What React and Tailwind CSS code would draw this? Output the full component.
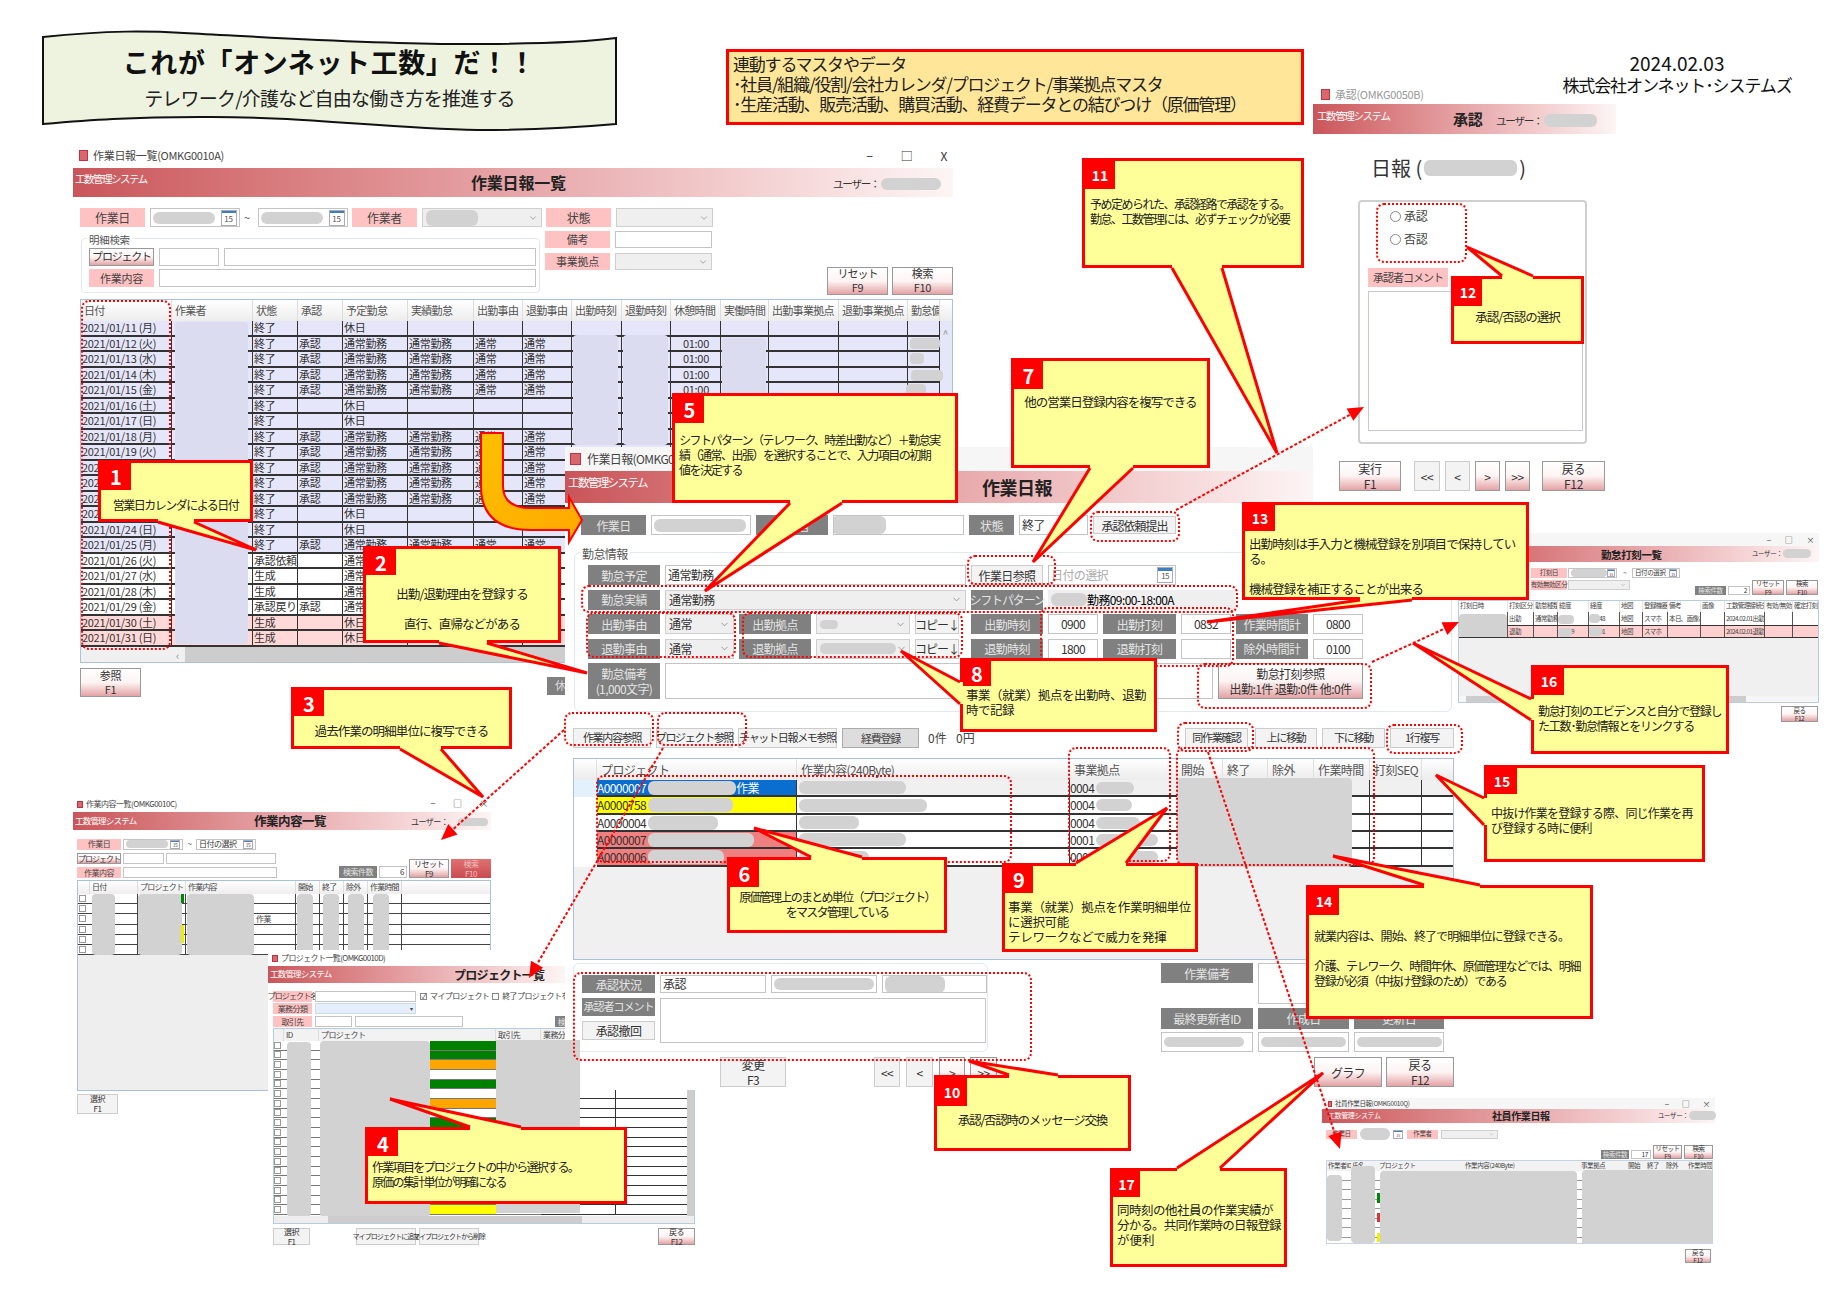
import React from "react";
import { ChevronDown } from "lucide-react";

const Blob = ({ c = "" }) => <span className={`block shrink-0 bg-[#d2d2d2] rounded-md blur-[0.5px] ${c}`} />;
const AbsBlob = ({ c = "" }) => <div className={`absolute bg-[#d2d2d2] rounded-sm ${c}`} />;
const Pink = ({ c = "", children }) => <div className={`flex items-center justify-center shrink-0 whitespace-nowrap bg-[#ffc2c2] text-[#444] ${c}`}>{children}</div>;
const Gray = ({ c = "", children }) => <div className={`flex flex-col items-center justify-center shrink-0 whitespace-nowrap bg-[#808080] text-[#e4e4e4] leading-tight ${c}`}>{children}</div>;
const Inp = ({ c = "", children }) => <div className={`flex items-center shrink-0 whitespace-nowrap overflow-hidden border border-[#c4c4c4] bg-white px-[2px] text-[#333] ${c}`}>{children}</div>;
const Combo = ({ c = "", s = 10, children }) => (
  <div className={`flex items-center justify-between shrink-0 whitespace-nowrap overflow-hidden border border-[#cfcfcf] bg-[#efefef] px-[3px] text-[#333] ${c}`}>
    <span className="flex items-center">{children}</span>
    <ChevronDown size={s} strokeWidth={1.5} className="text-[#777] shrink-0" />
  </div>
);
const Btn = ({ c = "", children }) => <div className={`flex flex-col items-center justify-center shrink-0 whitespace-nowrap leading-tight border border-[#999] bg-linear-to-b from-white via-[#fdf4f4] to-[#e3a3a5] text-[#333] ${c}`}>{children}</div>;
const Plain = ({ c = "", children }) => <div className={`flex flex-col items-center justify-center shrink-0 whitespace-nowrap leading-tight border border-[#ccc] bg-[#f3f3f3] text-[#333] ${c}`}>{children}</div>;
const Ico = ({ c = "w-[9px] h-[11px]" }) => <span className={`block shrink-0 bg-[#d9686c] border border-[#b34] ${c}`} />;
const Cal = ({ c = "w-[16px] h-[16px] text-[8px]" }) => (
  <span className={`flex flex-col shrink-0 border border-[#aab] bg-white text-[#555] leading-none ${c}`}>
    <span className="block h-[18%] bg-[#3f7fc0]" />
    <span className="flex flex-1 items-center justify-center">15</span>
  </span>
);
const Header = ({ c = "", sys, sysC, title, titleC, user, blobC }) => (
  <div className={`flex items-center relative shrink-0 bg-linear-to-r from-[#c9555a] via-[#e6a5a8] to-[#fdf5f5] ${c}`}>
    <span className={`absolute whitespace-nowrap text-white ${sysC}`}>{sys}</span>
    <span className={`absolute font-bold whitespace-nowrap text-[#222] ${titleC}`}>{title}</span>
    <span className={`absolute flex items-center whitespace-nowrap text-[#333] ${user}`}>ユーザー：<Blob c={blobC} /></span>
  </div>
);
const Dash = ({ c }) => <div className={`absolute border-2 border-dotted border-[#f00] rounded-[8px] pointer-events-none ${c}`} />;

/* ---------- callouts ---------- */
const Tail = ({ a, t, b, e }) => (
  <svg className="absolute left-0 top-0 w-[1847px] h-[1306px] pointer-events-none">
    <polygon points={`${a[0]},${a[1]} ${t[0]},${t[1]} ${b[0]},${b[1]} ${b[0] + e[0]},${b[1] + e[1]} ${a[0] + e[0]},${a[1] + e[1]}`} fill="#ffff99" />
    <polyline points={`${a[0]},${a[1]} ${t[0]},${t[1]} ${b[0]},${b[1]}`} fill="none" stroke="#ff0000" strokeWidth="3" />
  </svg>
);
const Call = ({ box, numC, n, tail, children }) => (
  <>
    <div className={`absolute bg-[#ffff99] border-[3px] border-[#f00] text-[12.5px] leading-[15px] text-[#222] overflow-hidden whitespace-nowrap ${box}`}>
      <div className={`flex items-center justify-center bg-[#f00] text-white font-bold tracking-normal ${numC}`}>{n}</div>
      {children}
    </div>
    {tail && <Tail {...tail} />}
  </>
);

/* ---------- window A table ---------- */
const gA = "grid grid-cols-[91px_81px_45px_45px_65px_66px_49px_49px_50px_49px_50px_48px_70px_69px_32px]";
const hA = ["日付", "作業者", "状態", "承認", "予定勤怠", "実績勤怠", "出勤事由", "退勤事由", "出勤時刻", "退勤時刻", "休憩時間", "実働時間", "出勤事業拠点", "退勤事業拠点", "勤怠備"];
const W = ["終了", "承認", "通常勤務", "通常勤務", "通常", "通常"];
const H = ["終了", "", "休日", "", "", ""];
const rowsA = [
  ["11 (月)", H, 0, 0], ["12 (火)", W, 0, 1], ["13 (水)", W, 0, 1], ["14 (木)", W, 0, 1], ["15 (金)", W, 0, 1], ["16 (土)", H, 0, 0], ["17 (日)", H, 0, 0],
  ["18 (月)", W, 0, 1], ["19 (火)", W, 0, 1], ["20 (水)", W, 0, 1], ["21 (木)", W, 0, 1], ["22 (金)", W, 0, 1], ["23 (土)", H, 0, 0], ["24 (日)", H, 0, 0], ["25 (月)", W, 0, 1],
  ["26 (火)", ["承認依頼", "", "通常勤務", "", "", ""], 1, 0], ["27 (水)", ["生成", "", "通常勤務", "", "", ""], 1, 0], ["28 (木)", ["生成", "", "通常勤務", "", "", ""], 1, 0], ["29 (金)", ["承認戻り", "承認", "通常勤務", "", "", ""], 1, 0],
  ["30 (土)", ["生成", "", "休日", "", "", ""], 2, 0], ["31 (日)", ["生成", "", "休日", "", "", ""], 2, 0],
];
const bgA = ["bg-[#e6e6fa]", "bg-white", "bg-[#ffd8d8]"];
const cellA = "border-r border-b-2 border-[#333] pl-[1px] overflow-hidden whitespace-nowrap leading-[13px]";

const WindowA = () => (
  <div className="absolute left-[73px] top-[143px] w-[880px] h-[560px] bg-white text-[11px] tracking-[-0.3px] flex flex-col">
    <div className="h-[25px] flex items-center pl-[6px] gap-[5px] text-[#444]">
      <Ico /><span>作業日報一覧(OMKG0010A)</span>
      <span className="ml-auto flex gap-[28px] pr-[6px] text-[#333] text-[12px]"><span>−</span><span>□</span><span>X</span></span>
    </div>
    <Header c="h-[29px]" sys="工数管理システム" sysC="left-[2px] top-[3px] text-[10.5px] tracking-[-1.5px]" title="作業日報一覧" titleC="left-[398px] top-[2px] text-[16px] tracking-[-0.2px]" user="left-[760px] top-[8px] text-[10.5px] tracking-[-1.2px]" blobC="w-[60px] h-[12px] ml-[2px]" />
    <div className="mt-[11px] ml-[7px] flex items-center gap-[4.5px]">
      <Pink c="w-[65px] h-[19px] text-[12px]">作業日</Pink>
      <Inp c="w-[90px] h-[19px] justify-between border-[#a8bcd8]"><Blob c="w-[62px] h-[12px]" /><Cal /></Inp>
      <span className="w-[9px] text-[#555]">~</span>
      <Inp c="w-[90px] h-[19px] justify-between border-[#a8bcd8]"><Blob c="w-[62px] h-[12px]" /><Cal /></Inp>
      <Pink c="w-[65px] h-[19px] text-[12px]">作業者</Pink>
      <Combo c="w-[120px] h-[19px]"><Blob c="w-[52px] h-[16px]" /></Combo>
      <Pink c="w-[65px] h-[19px] text-[12px]">状態</Pink>
      <Combo c="w-[97px] h-[19px]" />
    </div>
    <div className="flex items-start mt-[4px] ml-[8px]">
      <div className="relative mt-[7px] w-[459px] h-[55px] border border-[#e2e8ee] rounded flex flex-col gap-[3px] pl-[7px] pt-[9px]">
        <span className="absolute left-[5px] -top-[7px] bg-white px-[2px] text-[#555] text-[10.5px]">明細検索</span>
        <div className="flex gap-[5px]"><Btn c="w-[65px] h-[18px] tracking-[-1.2px]">プロジェクト</Btn><Inp c="w-[60px] h-[18px]" /><Inp c="w-[312px] h-[18px]" /></div>
        <div className="flex gap-[5px]"><Pink c="w-[65px] h-[18px]">作業内容</Pink><Inp c="w-[377px] h-[18px]" /></div>
      </div>
      <div className="ml-[5px] flex flex-col gap-[5px]">
        <div className="flex gap-[5px]"><Pink c="w-[65px] h-[17px]">備考</Pink><Inp c="w-[97px] h-[17px]" /></div>
        <div className="flex gap-[5px]"><Pink c="w-[65px] h-[17px]">事業拠点</Pink><Combo c="w-[97px] h-[17px]" /></div>
      </div>
      <div className="ml-[115px] mt-[36px] flex gap-[4px]">
        <Btn c="w-[61px] h-[28px]"><span className="tracking-[-1px]">リセット</span><span>F9</span></Btn>
        <Btn c="w-[61px] h-[28px]"><span>検索</span><span>F10</span></Btn>
      </div>
    </div>
    <div className="relative mt-[4px] ml-[7px] w-[873px] h-[364px] border border-[#a9c1dc] text-[#333] overflow-hidden">
      <div className={`${gA} h-[21px] bg-linear-to-b from-white to-[#ededed] text-[#555] tracking-[-0.7px]`}>
        {hA.map((t) => <div key={t} className="border-r border-[#ddd] pl-[3px] flex items-center whitespace-nowrap overflow-hidden">{t}</div>)}
      </div>
      {rowsA.map(([d, r, k, rest]) => (
        <div key={d} className={`${gA} h-[15.5px] ${bgA[k]}`}>
          <div className={cellA}>2021/01/{d}</div>
          <div className={cellA} />
          {r.map((t, i) => <div key={i} className={cellA}>{t}</div>)}
          <div className={cellA} /><div className={cellA} />
          <div className={`${cellA} text-center`}>{rest ? "01:00" : ""}</div>
          <div className={cellA} /><div className={cellA} /><div className={cellA} /><div className={cellA} />
        </div>
      ))}
      <AbsBlob c="left-[94px] top-[22px] w-[73px] h-[322px] bg-[#dcdcf0]" />
      <AbsBlob c="left-[492px] top-[35px] w-[45px] h-[110px] bg-[#dcdcf0]" />
      <AbsBlob c="left-[542px] top-[35px] w-[45px] h-[110px] bg-[#dcdcf0]" />
      <AbsBlob c="left-[641px] top-[38px] w-[44px] h-[58px] bg-[#dcdcf0]" />
      <AbsBlob c="left-[829px] top-[38px] w-[30px] h-[11px]" />
      <AbsBlob c="left-[829px] top-[53px] w-[14px] h-[11px]" />
      <AbsBlob c="left-[830px] top-[70px] w-[32px] h-[11px]" />
      <AbsBlob c="left-[825px] top-[84px] w-[20px] h-[11px]" />
      <span className="absolute right-[4px] top-[26px] text-[#888] text-[10px]">^</span>
      <div className="absolute left-0 right-0 top-[346.5px] h-[18px] bg-[#f0f0f0] flex items-center pl-[95px] text-[#888]">
        <span className="w-[9px]">‹</span><div className="h-full w-[760px] bg-[#cdcdcd]" />
      </div>
    </div>
    <div className="mt-[5px] ml-[7px] flex justify-between w-[492px]">
      <Btn c="w-[61px] h-[29px]"><span>参照</span><span>F1</span></Btn>
      <div className="mt-[9px] w-[25px] h-[18px] bg-[#808080] text-[#ddd] overflow-hidden pl-[8px] whitespace-nowrap">休憩</div>
    </div>
  </div>
);

/* ---------- window C ---------- */
const WindowC = () => (
  <div className="absolute left-[1313px] top-[85px] w-[303px] h-[410px] flex flex-col text-[11px] tracking-[-0.3px] text-[#444]">
    <div className="h-[19px] flex items-center gap-[5px] pl-[8px] text-[#999]"><Ico /><span>承認(OMKG0050B)</span></div>
    <Header c="h-[30px]" sys="工数管理システム" sysC="left-[4px] top-[4px] text-[10.5px] tracking-[-1.4px]" title="承認" titleC="left-[140px] top-[4px] text-[15px]" user="left-[183px] top-[9px] text-[10.5px] tracking-[-1.2px]" blobC="w-[53px] h-[13px] ml-[2px]" />
    <div className="ml-[58px] mt-[22px] flex items-center text-[20px] leading-[24px] text-[#333] tracking-normal">日報 (<Blob c="w-[93px] h-[16px] mx-[2px]" />)</div>
    <div className="ml-[45px] mt-[20px] w-[229px] h-[244px] border-2 border-[#d0d0d0] rounded pl-[8px] flex flex-col text-[12px]">
      <div className="ml-[22px] mt-[6px] flex items-center gap-[3px] h-[16px]"><span className="block w-[11px] h-[11px] rounded-full border border-[#888] bg-white" />承認</div>
      <div className="ml-[22px] mt-[7px] flex items-center gap-[3px] h-[16px]"><span className="block w-[11px] h-[11px] rounded-full border border-[#888] bg-white" />否認</div>
      <Pink c="mt-[21px] w-[80px] h-[19px] text-[11px] tracking-[-1px]">承認者コメント</Pink>
      <div className="mt-[4px] w-[215px] h-[140px] border border-[#c8c8d8] bg-white" />
    </div>
    <div className="ml-[26px] mt-[17px] flex gap-[5px] text-[12px]">
      <Btn c="w-[62px] h-[30px]"><span>実行</span><span>F1</span></Btn>
      <Plain c="ml-[8px] w-[26px] h-[30px]">{"<<"}</Plain>
      <Plain c="w-[25px] h-[30px]">{"<"}</Plain>
      <Btn c="w-[25px] h-[30px]">{">"}</Btn>
      <Btn c="w-[25px] h-[30px]">{">>"}</Btn>
      <Btn c="ml-[7px] w-[63px] h-[30px]"><span>戻る</span><span>F12</span></Btn>
    </div>
  </div>
);

/* ---------- window D ---------- */
const gD = "grid grid-cols-[49px_26px_24px_31px_31px_23px_25px_33px_24px_40px_28px_27px]";
const WindowD = () => (
  <div className="absolute left-[1458px] top-[533px] w-[361px] h-[190px] bg-white text-[6.5px] tracking-[-0.4px] text-[#444] flex flex-col">
    <div className="h-[13px] bg-[#f6f6f6] flex justify-end items-center gap-[14px] pr-[5px] text-[8px]"><span>−</span><span>□</span><span>×</span></div>
    <Header c="h-[16px]" sys="" sysC="" title="勤怠打刻一覧" titleC="left-[143px] top-[1px] text-[10.5px]" user="left-[294px] top-[3px] text-[6.5px]" blobC="w-[28px] h-[9px] ml-[1px] rounded-full" />
    <div className="mt-[6px] ml-[73px] flex items-center gap-[1px]"><Pink c="w-[36px] h-[10px]">打刻日</Pink><Inp c="w-[49px] h-[10px] justify-between"><Blob c="w-[36px] h-[8px]" /><Cal c="w-[8px] h-[8px] text-[4px]" /></Inp><span className="w-[13px] text-center">~</span><Inp c="w-[48px] h-[10px] justify-between">日付の選択<Cal c="w-[8px] h-[8px] text-[4px]" /></Inp></div>
    <div className="relative mt-[2px] ml-[73px] flex items-start gap-[1px] h-[20px]">
      <Pink c="w-[36px] h-[10px]">有効無効区分</Pink><Combo c="w-[62px] h-[10px]" s={6} />
      <div className="ml-auto mr-[1px] flex items-end gap-[2px]">
        <Gray c="w-[31px] h-[9px]">検索件数</Gray>
        <Inp c="w-[22px] h-[9px] justify-end">2</Inp>
        <Btn c="w-[32px] h-[15px]"><span>リセット</span><span>F9</span></Btn>
        <Btn c="w-[32px] h-[15px]"><span>検索</span><span>F10</span></Btn>
      </div>
    </div>
    <div className="relative h-[103px] border border-[#b8cce0] bg-[#f0f0f0] overflow-hidden">
      <div className={`${gD} h-[11px] bg-white tracking-[-0.6px]`}>
        {["打刻日時", "打刻区分", "勤怠種類", "緯度", "経度", "地図", "登録機器", "備考", "画像", "工数管理接続先", "有効/無効", "確定打刻"].map((t) => <div key={t} className="pl-[1px] border-r border-[#e4e4e4] overflow-hidden whitespace-nowrap">{t}</div>)}
      </div>
      <div className={`${gD} h-[14px] bg-white border-b border-[#333] tracking-[-0.6px]`}>
        {["", "出勤", "通常勤務", "-7905", "53848", "地図", "スマホ", "本日、画像あり", "", "2024.02.01出勤", "", ""].map((t, i) => <div key={i} className="pl-[1px] border-r border-[#555] overflow-hidden whitespace-nowrap flex items-center">{t}</div>)}
      </div>
      <div className={`${gD} h-[12px] bg-[#ffd0d0] border-b border-[#333] tracking-[-0.6px]`}>
        {["", "退勤", "", "69869", "54301", "地図", "スマホ", "", "", "2024.02.01退勤", "", ""].map((t, i) => <div key={i} className="pl-[1px] border-r border-[#555] overflow-hidden whitespace-nowrap flex items-center">{t}</div>)}
      </div>
      <AbsBlob c="left-0 top-[13px] w-[48px] h-[23px]" />
      <AbsBlob c="left-[99px] top-[14px] w-[16px] h-[9px] rounded-full" />
      <AbsBlob c="left-[130px] top-[13px] w-[11px] h-[9px] rounded-full" />
      <AbsBlob c="left-[99px] top-[27px] w-[14px] h-[9px] rounded-full" />
      <AbsBlob c="left-[130px] top-[26px] w-[13px] h-[9px] rounded-full" />
      <div className="absolute left-0 right-0 bottom-0 h-[6px] bg-[#f6f6f6] flex px-[7px]"><div className="w-[280px] h-full bg-[#cdcdcd]" /></div>
    </div>
    <div className="mt-[3px] mr-[1px] self-end"><Btn c="w-[37px] h-[16px]"><span>戻る</span><span>F12</span></Btn></div>
  </div>
);

/* ---------- window E ---------- */
const gE = "grid grid-cols-[12px_48px_48px_110px_24px_24px_24px_34px_90px]";
const WindowE = () => (
  <div className="absolute left-[73px] top-[796px] w-[418px] h-[320px] bg-white text-[8px] tracking-[-0.5px] text-[#444] flex flex-col">
    <div className="h-[16px] flex items-center gap-[3px] pl-[4px]"><Ico c="w-[6px] h-[7px]" /><span>作業内容一覧(OMKG0010C)</span>
      <span className="ml-auto flex gap-[18px] pr-[3px] text-[9px]"><span>−</span><span>□</span><span>×</span></span></div>
    <Header c="h-[18px]" sys="工数管理システム" sysC="left-[2px] top-[2px] text-[8.5px] tracking-[-0.8px]" title="作業内容一覧" titleC="left-[181px] top-[0px] text-[12.5px]" user="left-[338px] top-[4px] text-[8px]" blobC="w-[30px] h-[8px] ml-[10px] rounded-full" />
    <div className="mt-[8px] ml-[4px] flex items-center gap-[2px]"><Pink c="w-[44px] h-[11px]">作業日</Pink><Inp c="w-[60px] h-[11px] justify-between border-[#b0c4dc]"><Blob c="w-[42px] h-[8px]" /><Cal c="w-[10px] h-[9px] text-[5px]" /></Inp><span className="w-[9px] text-center">~</span><Inp c="w-[60px] h-[11px] justify-between border-[#b0c4dc]">日付の選択<Cal c="w-[10px] h-[9px] text-[5px]" /></Inp></div>
    <div className="relative mt-[3px] ml-[4px] h-[25px] flex items-end">
      <div className="flex flex-col gap-[3px]">
        <div className="flex gap-[2px]"><Btn c="w-[44px] h-[11px] tracking-[-1px]">プロジェクト</Btn><Inp c="w-[41px] h-[11px]" /><Inp c="w-[110px] h-[11px]" /></div>
        <div className="flex gap-[2px]"><Pink c="w-[44px] h-[11px]">作業内容</Pink><Inp c="w-[154px] h-[11px]" /></div>
      </div>
      <div className="ml-auto flex items-end gap-[2px]">
        <Gray c="w-[38px] h-[12px]">検索件数</Gray><Inp c="w-[28px] h-[12px] justify-end">6</Inp>
        <Btn c="w-[40px] h-[19px]"><span>リセット</span><span>F9</span></Btn>
        <div className="flex flex-col items-center justify-center w-[40px] h-[19px] leading-tight bg-linear-to-b from-[#e07070] to-[#c94c50] text-[#f0c0c0]"><span>検索</span><span>F10</span></div>
      </div>
    </div>
    <div className="relative mt-[2px] ml-[4px] w-[414px] h-[211px] border border-[#a9c1dc] bg-[#eee] overflow-hidden">
      <div className={`${gE} h-[13px] bg-linear-to-b from-white to-[#eee] tracking-[-0.8px]`}>
        {["", "日付", "プロジェクト", "作業内容", "開始", "終了", "除外", "作業時間", ""].map((t, i) => <div key={i} className="pl-[2px] whitespace-nowrap overflow-hidden border-r border-[#ddd]">{t}</div>)}
      </div>
      {["/26", "/26", "/26", "/29", "/29", "/29"].map((d, i) => (
        <div key={i} className={`${gE} h-[10.2px] bg-white`}>
          <div className="border-b border-[#444] flex items-center"><span className="block w-[7px] h-[7px] border border-[#999] ml-[1px]" /></div>
          <div className="border-b border-r border-[#444] text-right pr-[26px] leading-[9px]">{d}</div>
          <div className="border-b border-r border-[#444]" />
          <div className="border-b border-r border-[#444]" />
          <div className="border-b border-r border-[#444]" /><div className="border-b border-r border-[#444]" /><div className="border-b border-r border-[#444]" /><div className="border-b border-r border-[#444]" />
          <div className="border-b border-[#444]" />
        </div>
      ))}
      <AbsBlob c="left-[14px] top-[13px] w-[23px] h-[61px]" />
      <AbsBlob c="left-[60px] top-[13px] w-[44px] h-[61px]" />
      <div className="absolute left-[103px] top-[13px] w-[3px] h-[9px] bg-[#080]" />
      <div className="absolute left-[103px] top-[44px] w-[3px] h-[18px] bg-[#ee0]" />
      <AbsBlob c="left-[109px] top-[13px] w-[67px] h-[61px]" />
      <AbsBlob c="left-[219px] top-[13px] w-[16px] h-[61px]" />
      <AbsBlob c="left-[245px] top-[13px] w-[16px] h-[61px]" />
      <AbsBlob c="left-[270px] top-[13px] w-[16px] h-[61px]" />
      <AbsBlob c="left-[295px] top-[13px] w-[16px] h-[61px]" />
      <span className="absolute left-[178px] top-[33px] leading-[10px]">作業</span>
    </div>
    <div className="mt-[3px] ml-[4px]"><Plain c="w-[41px] h-[20px]"><span>選択</span><span>F1</span></Plain></div>
  </div>
);

/* ---------- window F ---------- */
const gF = "grid grid-cols-[10px_35px_177px_45px_75px_80px]";
const strip = ["bg-[#008000]", "bg-[#008000]", "bg-[#ffa500]", "bg-white", "bg-[#008000]", "bg-white", "bg-[#ffa500]", "bg-white", "bg-[#008000]", "bg-white", "bg-white", "bg-white", "bg-white", "bg-white", "bg-white", "bg-white", "bg-white", "bg-[#ffff00]"];
const WindowF = () => (
  <div className="absolute left-[268px] top-[950px] w-[427px] h-[295px] bg-white text-[8px] tracking-[-0.6px] text-[#444] flex flex-col">
    <div className="h-[16px] flex items-center gap-[3px] pl-[4px]"><Ico c="w-[6px] h-[7px]" /><span>プロジェクト一覧(OMKG0010D)</span></div>
    <Header c="h-[17px] w-[297px]" sys="工数管理システム" sysC="left-[2px] top-[1px] text-[8.5px] tracking-[-0.8px]" title="プロジェクト一覧" titleC="left-[186px] top-[0px] text-[12px] tracking-[-0.7px]" user="hidden" blobC="" />
    <div className="mt-[8px] ml-[5px] flex items-center gap-[3px] h-[10px]"><Pink c="w-[39px] h-[11px] tracking-[-0.9px]">プロジェクト名</Pink><Inp c="w-[101px] h-[11px]" />
      <span className="ml-[1px] flex items-center justify-center w-[7px] h-[7px] border border-[#888] text-[7px] leading-none">✓</span><span className="whitespace-nowrap">マイプロジェクト</span>
      <span className="block w-[7px] h-[7px] border border-[#888]" /><span className="whitespace-nowrap">終了プロジェクトを含む</span></div>
    <div className="mt-[2px] ml-[5px] flex items-center gap-[3px]"><Pink c="w-[39px] h-[11px]">業務分類</Pink><div className="w-[101px] h-[11px] flex items-center justify-end pr-[3px] bg-[#e4eefc] border border-[#cdd]"><span className="text-[6px]">▾</span></div></div>
    <div className="mt-[2px] ml-[5px] flex items-center gap-[3px]"><Pink c="w-[39px] h-[11px]">取引先</Pink><Inp c="w-[37px] h-[11px]" /><Inp c="w-[108px] h-[11px]" />
      <Gray c="ml-[89px] w-[13px] h-[11px] overflow-hidden">検</Gray></div>
    <div className="relative mt-[1px] ml-[5px] w-[422px] h-[196px] border border-[#b8cce0] bg-white overflow-hidden">
      <div className={`${gF} h-[12px] bg-[#f2f2f2]`}>
        {["", "ID", "プロジェクト", "取引先", "業務分類", ""].map((t, i) => <div key={i} className="pl-[2px] whitespace-nowrap overflow-hidden border-r border-[#ddd]">{t}</div>)}
      </div>
      {strip.map((s, i) => (
        <div key={i} className={`${gF} h-[9.66px]`}>
          <div className="border-b border-[#777] flex items-center"><span className="block w-[7px] h-[7px] border border-[#999]" /></div>
          <div className="border-b border-[#777]" />
          <div className="flex justify-end border-b border-[#777]"><div className={`w-[66px] h-full ${s}`} /></div>
          <div className="border-b border-[#777]" />
          <div className="border-b border-r border-[#333]" />
          <div className="border-b border-[#333]" />
        </div>
      ))}
      <AbsBlob c="left-[13px] top-[13px] w-[24px] h-[175px]" />
      <AbsBlob c="left-[46px] top-[12px] w-[110px] h-[176px]" />
      <div className="absolute right-0 top-[60px] w-[7px] h-[128px] bg-[#cdcdcd]" />
      <div className="absolute left-0 right-0 bottom-0 h-[7px] bg-[#eee] flex pl-[54px]"><div className="w-[254px] h-full bg-[#cdcdcd]" /></div>
    </div>
    <div className="mt-[4px] ml-[5px] flex items-center">
      <Plain c="w-[37px] h-[17px]"><span>選択</span><span>F1</span></Plain>
      <Plain c="ml-[46px] w-[60px] h-[17px] text-[7px] tracking-[-0.9px]">マイプロジェクトに追加</Plain>
      <Plain c="ml-[3px] w-[60px] h-[17px] text-[7px] tracking-[-1px]">マイプロジェクトから削除</Plain>
      <Btn c="ml-[179px] w-[37px] h-[17px]"><span>戻る</span><span>F12</span></Btn>
    </div>
  </div>
);

/* ---------- window G ---------- */
const WindowG = () => (
  <div className="absolute left-[1322px] top-[1098px] w-[393px] h-[165px] bg-white text-[6.5px] tracking-[-0.4px] text-[#444] flex flex-col">
    <div className="h-[11px] bg-[#f6f6f6] flex items-center gap-[3px] pl-[6px]"><Ico c="w-[4px] h-[6px]" /><span>社員作業日報(OMKG0010Q)</span>
      <span className="ml-auto flex gap-[13px] pr-[5px] text-[8px]"><span>−</span><span>□</span><span>×</span></span></div>
    <Header c="h-[14px]" sys="工数管理システム" sysC="left-[6px] top-[1px] text-[7px]" title="社員作業日報" titleC="left-[170px] top-[-1px] text-[10px]" user="left-[336px] top-[2px] text-[6.5px]" blobC="w-[27px] h-[9px] ml-[1px] rounded-full" />
    <div className="mt-[5px] ml-[4px] flex items-center gap-[3px]"><Pink c="w-[31px] h-[9px]">作業日</Pink><Blob c="w-[30px] h-[12px]" /><Cal c="w-[10px] h-[9px] text-[4px]" /><Pink c="ml-[1px] w-[31px] h-[9px]">作業者</Pink><Combo c="w-[57px] h-[9px]" s={5} /></div>
    <div className="mt-[5px] h-[14px] flex items-end justify-end gap-[2px] pr-[2px]">
      <Gray c="w-[28px] h-[9px]">検索件数</Gray><Inp c="w-[20px] h-[9px] justify-end">17</Inp>
      <Btn c="w-[29px] h-[14px]"><span>リセット</span><span>F9</span></Btn>
      <Btn c="w-[29px] h-[14px]"><span>検索</span><span>F10</span></Btn>
    </div>
    <div className="relative mt-[1px] ml-[4px] w-[387px] h-[87px] border border-[#c4d4e4] bg-white overflow-hidden">
      <div className="grid grid-cols-[24px_27px_86px_116px_47px_19px_19px_22px_27px] h-[10px] bg-[#f2f2f2]">
        {["作業者ID", "氏名", "プロジェクト", "作業内容(240Byte)", "事業拠点", "開始", "終了", "除外", "作業時間"].map((t) => <div key={t} className="pl-[1px] whitespace-nowrap overflow-hidden">{t}</div>)}
      </div>
      {[0, 1, 2, 3, 4, 5, 6, 7].map((i) => <div key={i} className="h-[9.5px] border-b border-[#999]" />)}
      <AbsBlob c="left-0 top-[14px] w-[15px] h-[66px]" />
      <AbsBlob c="left-[24px] top-[5px] w-[24px] h-[77px]" />
      <AbsBlob c="left-[53px] top-[10px] w-[197px] h-[75px]" />
      <AbsBlob c="left-[255px] top-[9px] w-[131px] h-[76px]" />
      <div className="absolute left-[50px] top-[32px] w-[3px] h-[10px] bg-[#080]" />
      <div className="absolute left-[50px] top-[52px] w-[3px] h-[9px] bg-[#d33]" />
      <div className="absolute left-[50px] top-[72px] w-[3px] h-[9px] bg-[#ee0]" />
    </div>
    <div className="mt-[5px] mr-[4px] self-end"><Btn c="w-[26px] h-[14px]"><span>戻る</span><span>F12</span></Btn></div>
  </div>
);

/* ---------- window B ---------- */
const gB = "grid grid-cols-[23px_200px_273px_107px_46px_45px_46px_56px_52px_33px]";
const rowsB = [
  { h: "h-[17px]", c0: "bg-[#e2f1fb]", c: "bg-[#0a6ed1] text-white", id: "A0000007", w: "w-[88px]", suf: "作業", w2: "w-[107px]", t: "0004", w3: "w-[38px]", bg: "bg-[#f0f0f0]" },
  { h: "h-[18px]", c0: "bg-white", c: "bg-[#ffff00]", id: "A0000758", w: "w-[85px]", w2: "w-[128px]", t: "0004", w3: "w-[36px]", bg: "bg-white" },
  { h: "h-[17px]", c0: "bg-white", c: "bg-white", id: "A0000004", w: "w-[70px]", w2: "w-[60px]", t: "0004", w3: "w-[44px]", bg: "bg-white" },
  { h: "h-[17px]", c0: "bg-white", c: "bg-[#f08080]", id: "A0000007", w: "w-[106px]", w2: "w-[107px]", t: "0001", w3: "w-[62px]", bg: "bg-white" },
  { h: "h-[18px]", c0: "bg-white", c: "bg-[#f08080]", id: "A0000006", w: "w-[76px]", w2: "w-[70px]", t: "0001", w3: "w-[62px]", bg: "bg-white" },
];
const WindowB = () => (
  <div className="absolute left-[565px] top-[447px] w-[748px] h-[643px] bg-white text-[12px] tracking-[-0.6px] flex flex-col">
    <div className="h-[24px] bg-[#f6f6f6] flex items-center gap-[6px] pl-[5px] text-[#444]"><Ico c="w-[11px] h-[12px]" /><span>作業日報(OMKG0010B)</span></div>
    <Header c="h-[32px]" sys="工数管理システム" sysC="left-[3px] top-[3px] text-[11.5px] tracking-[-1.6px]" title="作業日報" titleC="left-[417px] top-[3px] text-[18px] tracking-[-0.5px]" user="hidden" blobC="" />
    <div className="mt-[12px] ml-[16px] flex items-center gap-[5px]">
      <Gray c="w-[65px] h-[20px]">作業日</Gray>
      <Inp c="w-[100px] h-[20px] border-[#9cc4ea]"><Blob c="w-[92px] h-[13px]" /></Inp>
      <Gray c="w-[72px] h-[20px]">作業者</Gray>
      <Inp c="w-[131px] h-[20px]"><Blob c="w-[55px] h-[18px] -ml-[5px] rounded-full" /></Inp>
      <Gray c="w-[45px] h-[20px]">状態</Gray>
      <Inp c="w-[69px] h-[20px]">終了</Inp>
      <Plain c="w-[83px] h-[18px] tracking-[-1px]">承認依頼提出</Plain>
    </div>
    <div className="relative mt-[17px] ml-[9px] w-[878px] h-[160px] border border-[#e0e8f0] rounded-md pl-[13px] pt-[12px] flex flex-col gap-[4.6px] shrink-0 bg-white">
      <span className="absolute left-[6px] -top-[8px] bg-white px-[1px] text-[#555]">勤怠情報</span>
      <div className="flex gap-[5px]"><Gray c="w-[72px] h-[20px]">勤怠予定</Gray><Inp c="w-[301px] h-[20px]">通常勤務</Inp><Plain c="w-[72px] h-[20px]">作業日参照</Plain>
        <Inp c="w-[128px] h-[20px] justify-between text-[#aaa]">日付の選択<Cal /></Inp></div>
      <div className="flex gap-[5px]"><Gray c="w-[72px] h-[20px]">勤怠実績</Gray><Combo c="w-[301px] h-[20px]" s={11}>通常勤務</Combo><Gray c="w-[72px] h-[20px] tracking-[-1.2px]">シフトパターン</Gray>
        <div className="w-[187px] h-[20px] bg-[#efefef] flex items-center pl-[3px] whitespace-nowrap"><Blob c="w-[36px] h-[13px]" />勤務09:00-18:00A</div></div>
      <div className="flex gap-[5px]"><Gray c="w-[72px] h-[20px]">出勤事由</Gray><Combo c="w-[69px] h-[20px]" s={11}>通常</Combo><Gray c="w-[72px] h-[20px]">出勤拠点</Gray><Combo c="w-[94px] h-[20px]" s={11}><Blob c="w-[18px] h-[9px] rounded-full" /></Combo><Plain c="w-[44px] h-[20px] tracking-[-1px]">コピー↓</Plain>
        <Gray c="ml-[7px] w-[72px] h-[20px]">出勤時刻</Gray><Inp c="w-[50px] h-[20px] justify-center">0900</Inp><Gray c="w-[73px] h-[20px]">出勤打刻</Gray><Inp c="w-[50px] h-[20px] justify-center">0832</Inp><Gray c="w-[72px] h-[20px]">作業時間計</Gray><Inp c="w-[50px] h-[20px] justify-center">0800</Inp></div>
      <div className="flex gap-[5px]"><Gray c="w-[72px] h-[20px]">退勤事由</Gray><Combo c="w-[69px] h-[20px]" s={11}>通常</Combo><Gray c="w-[72px] h-[20px]">退勤拠点</Gray><Combo c="w-[94px] h-[20px]" s={11}><Blob c="w-[76px] h-[11px] rounded-full" /></Combo><Plain c="w-[44px] h-[20px] tracking-[-1px]">コピー↓</Plain>
        <Gray c="ml-[7px] w-[72px] h-[20px]">退勤時刻</Gray><Inp c="w-[50px] h-[20px] justify-center">1800</Inp><Gray c="w-[73px] h-[20px]">退勤打刻</Gray><Inp c="w-[50px] h-[20px]" /><Gray c="w-[72px] h-[20px]">除外時間計</Gray><Inp c="w-[50px] h-[20px] justify-center">0100</Inp></div>
      <div className="flex gap-[5px]"><Gray c="w-[72px] h-[36px]"><span>勤怠備考</span><span>(1,000文字)</span></Gray><Inp c="w-[548px] h-[36px]" /><Btn c="w-[145px] h-[36px]"><span>勤怠打刻参照</span><span>出勤:1件 退勤:0件 他:0件</span></Btn></div>
    </div>
    <div className="mt-[16px] ml-[8px] flex items-center gap-[5px] h-[20px] text-[11px] tracking-[-1.3px] shrink-0">
      <Plain c="w-[78px] h-[20px]">作業内容参照</Plain><Plain c="w-[77px] h-[20px]">プロジェクト参照</Plain><Plain c="w-[99px] h-[20px]">チャット日報メモ参照</Plain>
      <div className="flex items-center justify-center shrink-0 whitespace-nowrap w-[77px] h-[20px] bg-[#ddd] border border-[#aaa] text-[#444]">経費登録</div>
      <span className="ml-[4px] w-[18px] shrink-0 whitespace-nowrap text-[#444] text-[12px] tracking-normal">0件</span><span className="ml-[5px] w-[18px] shrink-0 whitespace-nowrap text-[#444] text-[12px] tracking-normal">0円</span>
      <Plain c="ml-[206px] w-[63px] h-[20px]">同作業確認</Plain>
      <Plain c="ml-[2px] w-[62px] h-[20px]">上に移動</Plain><Plain c="w-[63px] h-[20px]">下に移動</Plain><Plain c="w-[64px] h-[20px]">1行複写</Plain>
    </div>
    <div className="relative mt-[10px] ml-[8px] w-[881px] h-[202px] shrink-0 border border-[#a9c1dc] bg-[#f0f0f0] overflow-hidden text-[#333]">
      <div className={`${gB} h-[21px] bg-linear-to-b from-white to-[#ececec] text-[#555]`}>
        {["", "プロジェクト", "作業内容(240Byte)", "事業拠点", "開始", "終了", "除外", "作業時間", "打刻SEQ", ""].map((t, i) => <div key={i} className="pl-[4px] flex items-center whitespace-nowrap border-r border-[#e0e0e0]">{t}</div>)}
      </div>
      {rowsB.map((r, i) => (
        <div key={i} className={`${gB} ${r.h}`}>
          <div className={r.c0} />
          <div className={`flex items-center justify-start overflow-hidden border-b-2 border-r border-[#333] whitespace-nowrap ${r.c}`}>{r.id}<Blob c={`${r.w} h-[14px] ml-[2px]`} />{r.suf}</div>
          <div className={`flex items-center border-b-2 border-r border-[#333] pl-[2px] ${r.bg}`}><Blob c={`${r.w2} h-[13px]`} /></div>
          <div className={`flex items-center border-b-2 border-[#333] overflow-hidden ${r.bg}`}>{r.t}<Blob c={`${r.w3} h-[12px] ml-[2px]`} /></div>
          <div className={`border-b-2 border-[#333] ${r.bg}`} /><div className={`border-b-2 border-[#333] ${r.bg}`} /><div className={`border-b-2 border-[#333] ${r.bg}`} />
          <div className={`border-b-2 border-r border-[#333] ${r.bg}`} />
          <div className={`border-b-2 border-r border-[#333] ${r.bg}`} />
          <div className={`border-b-2 border-[#333] ${r.bg}`} />
        </div>
      ))}
      <AbsBlob c="left-[603px] top-[19px] w-[175px] h-[89px] bg-[#d4d4d4]" />
    </div>
    <div className="mt-[3px] ml-[8px] flex">
      <div className="w-[424px] h-[89px] border border-[#e0e8f0] rounded-md pl-[8px] pt-[11px] flex flex-col gap-[5px]">
        <div className="flex gap-[5px]"><Gray c="w-[73px] h-[18px]">承認状況</Gray><Inp c="w-[106px] h-[18px]">承認</Inp><Inp c="w-[106px] h-[18px]"><Blob c="w-[100px] h-[12px]" /></Inp><Inp c="w-[105px] h-[18px]"><Blob c="w-[60px] h-[17px] rounded-full" /></Inp></div>
        <div className="flex gap-[5px]">
          <div className="flex flex-col gap-[5px]"><Gray c="w-[73px] h-[18px] text-[11px] tracking-[-1px]">承認者コメント</Gray><Plain c="w-[73px] h-[19px]">承認撤回</Plain></div>
          <Inp c="w-[326px] h-[45px]" />
        </div>
      </div>
      <div className="ml-[173px] flex flex-col">
        <div className="flex gap-[5px]"><Gray c="w-[92px] h-[20px]">作業備考</Gray><Inp c="w-[187px] h-[41px]" /></div>
        <div className="flex gap-[5px] mt-[4px]"><Gray c="w-[92px] h-[21px]">最終更新者ID</Gray><Gray c="w-[91px] h-[21px]">作成日</Gray><Gray c="w-[90px] h-[21px]">更新日</Gray></div>
        <div className="flex gap-[5px] mt-[3px]"><Inp c="w-[92px] h-[20px]"><Blob c="w-[80px] h-[10px]" /></Inp><Inp c="w-[91px] h-[20px]"><Blob c="w-[85px] h-[10px]" /></Inp><Inp c="w-[90px] h-[20px]"><Blob c="w-[85px] h-[10px]" /></Inp></div>
      </div>
    </div>
    <div className="mt-[5px] flex items-start">
      <Plain c="ml-[155px] w-[66px] h-[30px]"><span>変更</span><span>F3</span></Plain>
      <Plain c="ml-[88px] w-[26px] h-[30px]">{"<<"}</Plain>
      <Plain c="ml-[6px] w-[27px] h-[30px]">{"<"}</Plain>
      <Btn c="ml-[6px] w-[26px] h-[30px]">{">"}</Btn>
      <Btn c="ml-[5px] w-[27px] h-[30px]">{">>"}</Btn>
      <Btn c="ml-[317px] w-[68px] h-[30px]">グラフ</Btn>
      <Btn c="ml-[4px] w-[68px] h-[30px]"><span>戻る</span><span>F12</span></Btn>
    </div>
  </div>
);

/* ---------- overlay arrows ---------- */
const Arrow = ({ x1, y1, x2, y2, h = 16, w = 7 }) => {
  const d = Math.hypot(x2 - x1, y2 - y1), ux = (x2 - x1) / d, uy = (y2 - y1) / d;
  const bx = x2 - ux * h, by = y2 - uy * h;
  return (
    <>
      <line x1={x1} y1={y1} x2={bx} y2={by} stroke="#f00" strokeWidth="2" strokeDasharray="3 2" />
      <polygon points={`${x2},${y2} ${bx - uy * w},${by + ux * w} ${bx + uy * w},${by - ux * w}`} fill="#f00" />
    </>
  );
};

export default function App() {
  return (
    <div className="relative w-[1847px] h-[1306px] overflow-hidden bg-white font-['Noto_Sans_CJK_JP',sans-serif]">
      {/* banner */}
      <svg className="absolute left-0 top-0 w-[640px] h-[140px]">
        <path d="M43,37 C110,30 150,31 184,33 C280,38 370,44 459,44 C520,44 580,43 616,38 L616,124 C560,129 510,130 478,130 C380,128 300,116 200,117 C130,117 90,120 43,124 Z" fill="#eef3e0" stroke="#111" strokeWidth="2" />
      </svg>
      <div className="absolute left-[43px] top-[45px] w-[573px] flex flex-col items-center">
        <div className="text-[27px] leading-[34px] font-bold tracking-[0.6px] text-[#111] whitespace-nowrap">これが「オンネット工数」だ！！</div>
        <div className="mt-[6px] text-[19px] leading-[26px] tracking-[-0.8px] text-[#222] whitespace-nowrap">テレワーク/介護など自由な働き方を推進する</div>
      </div>
      {/* master note */}
      <div className="absolute left-[726px] top-[49px] w-[578px] h-[76px] bg-[#ffe699] border-[3px] border-[#f00] pl-[4px] pt-[2px] text-[17px] leading-[20px] tracking-[-1.2px] text-[#222] whitespace-nowrap">
        <div>連動するマスタやデータ</div>
        <div>･社員/組織/役割/会社カレンダ/プロジェクト/事業拠点マスタ</div>
        <div>･生産活動、販売活動、購買活動、経費データとの結びつけ（原価管理）</div>
      </div>
      <div className="absolute left-[1550px] top-[52px] w-[254px] flex flex-col items-center text-[#111] whitespace-nowrap">
        <div className="text-[19px] leading-[22px]">2024.02.03</div>
        <div className="text-[17px] leading-[22px] tracking-[-1.1px]">株式会社オンネット･システムズ</div>
      </div>

      <WindowA />
      <WindowC />
      <WindowD />
      <WindowE />
      <WindowF />
      <WindowG />
      <WindowB />
      <div className="absolute left-[496px] top-[1040px] w-[84px] h-[173px] bg-[#d2d2d2]" />

      {/* big curved arrow */}
      <svg className="absolute left-0 top-0 w-[1847px] h-[1306px] pointer-events-none">
        <defs>
          <linearGradient id="ya" x1="0" y1="0" x2="1" y2="1"><stop offset="0" stopColor="#ffc000" /><stop offset="1" stopColor="#ffa800" /></linearGradient>
        </defs>
        <path d="M481,433 L503,433 L503,486 Q503,508 531,508 L569,508 L569,497 L582,520 L569,542 L569,530 L531,530 Q481,530 481,486 Z" fill="url(#ya)" stroke="#f00" strokeWidth="2" />
      </svg>

      {/* dotted emphasis */}
      <Dash c="left-[81px] top-[300px] w-[90px] h-[350px]" />
      <Dash c="left-[967px] top-[555px] w-[89px] h-[30px]" />
      <Dash c="left-[1090px] top-[511px] w-[90px] h-[31px]" />
      <Dash c="left-[581px] top-[585px] w-[657px] h-[28px]" />
      <Dash c="left-[586px] top-[612px] w-[150px] h-[46px]" />
      <Dash c="left-[742px] top-[612px] w-[221px] h-[46px]" />
      <Dash c="left-[1040px] top-[607px] w-[194px] h-[60px]" />
      <Dash c="left-[1197px] top-[663px] w-[175px] h-[46px]" />
      <Dash c="left-[564px] top-[712px] w-[90px] h-[34px]" />
      <Dash c="left-[657px] top-[712px] w-[90px] h-[34px]" />
      <Dash c="left-[1177px] top-[722px] w-[77px] h-[30px]" />
      <Dash c="left-[1386px] top-[724px] w-[77px] h-[30px]" />
      <Dash c="left-[1176px] top-[747px] w-[199px] h-[119px]" />
      <Dash c="left-[1068px] top-[747px] w-[103px] h-[115px]" />
      <Dash c="left-[596px] top-[775px] w-[416px] h-[88px]" />
      <Dash c="left-[573px] top-[972px] w-[459px] h-[89px]" />
      <Dash c="left-[1376px] top-[203px] w-[91px] h-[60px]" />

      {/* dotted arrows */}
      <svg className="absolute left-0 top-0 w-[1847px] h-[1306px] pointer-events-none">
        <Arrow x1={1176} y1={510} x2={1364} y2={407} />
        <Arrow x1={1372} y1={662} x2={1459} y2={622} />
        <Arrow x1={564} y1={730} x2={441} y2={840} />
        <Arrow x1={663} y1={748} x2={529} y2={978} />
        <Arrow x1={1208} y1={752} x2={1340} y2={1149} />
      </svg>

      {/* callouts */}
      <Call box="left-[98px] top-[460px] w-[155px] h-[62px]" numC="w-[30px] h-[27px] text-[20px]" n="1" tail={{ a: [158, 522], t: [256, 550], b: [194, 522], e: [0, -3] }}>
        <div className="mt-[7px] text-center text-[12px] tracking-[-1.5px]">営業日カレンダによる日付</div>
      </Call>
      <Call box="left-[363px] top-[546px] w-[198px] h-[97px]" numC="w-[30px] h-[26px] text-[20px]" n="2" tail={{ a: [439, 643], t: [587, 673], b: [487, 643], e: [0, -3] }}>
        <div className="mt-[11px] text-center tracking-[-0.9px]">出勤/退勤理由を登録する</div>
        <div className="mt-[15px] text-center tracking-[-0.9px]">直行、直帰などがある</div>
      </Call>
      <Call box="left-[291px] top-[687px] w-[221px] h-[62px]" numC="w-[30px] h-[26px] text-[20px]" n="3" tail={{ a: [400, 749], t: [483, 797], b: [441, 749], e: [0, -3] }}>
        <div className="mt-[7px] text-center tracking-[-0.9px]">過去作業の明細単位に複写できる</div>
      </Call>
      <Call box="left-[365px] top-[1127px] w-[262px] h-[77px]" numC="w-[30px] h-[26px] text-[20px]" n="4" tail={{ a: [470, 1127], t: [390, 1099], b: [521, 1127], e: [0, 3] }}>
        <div className="mt-[3px] ml-[4px] text-[12px] tracking-[-1.7px]">作業項目をプロジェクトの中から選択する。</div>
        <div className="ml-[4px] text-[12px] tracking-[-1.7px]">原価の集計単位が明確になる</div>
      </Call>
      <Call box="left-[672px] top-[393px] w-[286px] h-[110px]" numC="w-[29px] h-[27px] text-[20px]" n="5" tail={{ a: [790, 503], t: [705, 591], b: [842, 503], e: [0, -3] }}>
        <div className="mt-[9px] ml-[4px] text-[12px] tracking-[-1.5px]">シフトパターン（テレワーク、時差出勤など）＋勤怠実</div>
        <div className="ml-[4px] text-[12px] tracking-[-1.5px]">績（通常、出張）を選択することで、入力項目の初期</div>
        <div className="ml-[4px] text-[12px] tracking-[-1.5px]">値を決定する</div>
      </Call>
      <Call box="left-[727px] top-[857px] w-[220px] h-[76px]" numC="w-[29px] h-[27px] text-[20px]" n="6" tail={{ a: [811, 857], t: [754, 828], b: [862, 857], e: [0, 3] }}>
        <div className="mt-[2px] text-center text-[12px] tracking-[-1.7px]">原価管理上のまとめ単位（プロジェクト）</div>
        <div className="text-center text-[12px] tracking-[-1.7px]">をマスタ管理している</div>
      </Call>
      <Call box="left-[1011px] top-[358px] w-[199px] h-[110px]" numC="w-[29px] h-[28px] text-[20px]" n="7" tail={{ a: [1090, 468], t: [1033, 562], b: [1133, 468], e: [0, -3] }}>
        <div className="mt-[5px] text-center tracking-[-1px]">他の営業日登録内容を複写できる</div>
      </Call>
      <Call box="left-[960px] top-[658px] w-[197px] h-[74px]" numC="w-[28px] h-[25px] text-[20px]" n="8" tail={{ a: [960, 682], t: [901, 651], b: [960, 704], e: [3, 0] }}>
        <div className="mt-[1px] ml-[3px] tracking-[-0.5px]">事業（就業）拠点を出勤時、退勤</div>
        <div className="ml-[3px] tracking-[-0.5px]">時で記録</div>
      </Call>
      <Call box="left-[1002px] top-[863px] w-[196px] h-[89px]" numC="w-[28px] h-[27px] text-[20px]" n="9" tail={{ a: [1076, 863], t: [1167, 808], b: [1126, 863], e: [0, 3] }}>
        <div className="mt-[6px] ml-[3px] tracking-[-0.3px]">事業（就業）拠点を作業明細単位</div>
        <div className="ml-[3px] tracking-[-0.3px]">に選択可能</div>
        <div className="ml-[3px] tracking-[-0.3px]">テレワークなどで威力を発揮</div>
      </Call>
      <Call box="left-[934px] top-[1075px] w-[197px] h-[76px]" numC="w-[30px] h-[28px] text-[14px]" n="10" tail={{ a: [1009, 1075], t: [969, 1061], b: [1058, 1075], e: [0, 3] }}>
        <div className="mt-[6px] text-center tracking-[-1.3px]">承認/否認時のメッセージ交換</div>
      </Call>
      <Call box="left-[1082px] top-[158px] w-[222px] h-[110px]" numC="w-[30px] h-[28px] text-[14px]" n="11" tail={{ a: [1172, 268], t: [1277, 453], b: [1222, 268], e: [0, -3] }}>
        <div className="mt-[7px] ml-[5px] text-[12px] tracking-[-1.5px]">予め定められた、承認経路で承認をする。</div>
        <div className="ml-[5px] text-[12px] tracking-[-1.5px]">勤怠、工数管理には、必ずチェックが必要</div>
      </Call>
      <Call box="left-[1451px] top-[276px] w-[133px] h-[68px]" numC="w-[28px] h-[27px] text-[14px]" n="12" tail={{ a: [1502, 276], t: [1467, 247], b: [1533, 276], e: [0, 3] }}>
        <div className="mt-[3px] text-center tracking-[-1px]">承認/否認の選択</div>
      </Call>
      <Call box="left-[1242px] top-[502px] w-[287px] h-[98px]" numC="w-[30px] h-[26px] text-[14px]" n="13" tail={{ a: [1360, 600], t: [1207, 622], b: [1412, 600], e: [0, -3] }}>
        <div className="mt-[5px] ml-[4px] tracking-[-0.9px]">出勤時刻は手入力と機械登録を別項目で保持してい</div>
        <div className="ml-[4px] tracking-[-0.9px]">る。</div>
        <div className="mt-[15px] ml-[4px] tracking-[-0.9px]">機械登録を補正することが出来る</div>
      </Call>
      <Call box="left-[1306px] top-[885px] w-[287px] h-[134px]" numC="w-[30px] h-[27px] text-[14px]" n="14" tail={{ a: [1424, 885], t: [1333, 856], b: [1480, 885], e: [0, 3] }}>
        <div className="mt-[13px] ml-[5px] text-[12px] tracking-[-0.9px]">就業内容は、開始、終了で明細単位に登録できる。</div>
        <div className="mt-[15px] ml-[5px] text-[12px] tracking-[-1.3px]">介護、テレワーク、時間年休、原価管理などでは、明細</div>
        <div className="ml-[5px] text-[12px] tracking-[-1.3px]">登録が必須（中抜け登録のため）である</div>
      </Call>
      <Call box="left-[1484px] top-[765px] w-[221px] h-[97px]" numC="w-[30px] h-[26px] text-[14px]" n="15" tail={{ a: [1484, 798], t: [1436, 775], b: [1484, 825], e: [3, 0] }}>
        <div className="mt-[11px] ml-[4px] text-[12px] tracking-[-0.8px]">中抜け作業を登録する際、同じ作業を再</div>
        <div className="ml-[4px] text-[12px] tracking-[-0.8px]">び登録する時に便利</div>
      </Call>
      <Call box="left-[1531px] top-[665px] w-[198px] h-[89px]" numC="w-[30px] h-[27px] text-[14px]" n="16" tail={{ a: [1531, 699], t: [1413, 643], b: [1531, 720], e: [3, 0] }}>
        <div className="mt-[8px] ml-[4px] text-[12px] tracking-[-1.2px]">勤怠打刻のエビデンスと自分で登録し</div>
        <div className="ml-[4px] text-[12px] tracking-[-1.2px]">た工数･勤怠情報とをリンクする</div>
      </Call>
      <Call box="left-[1110px] top-[1168px] w-[177px] h-[99px]" numC="w-[27px] h-[26px] text-[14px]" n="17" tail={{ a: [1177, 1168], t: [1323, 1073], b: [1220, 1168], e: [0, 3] }}>
        <div className="mt-[5px] ml-[4px] tracking-[-0.5px]">同時刻の他社員の作業実績が</div>
        <div className="ml-[4px] tracking-[-0.8px]">分かる。共同作業時の日報登録</div>
        <div className="ml-[4px]">が便利</div>
      </Call>
    </div>
  );
}
